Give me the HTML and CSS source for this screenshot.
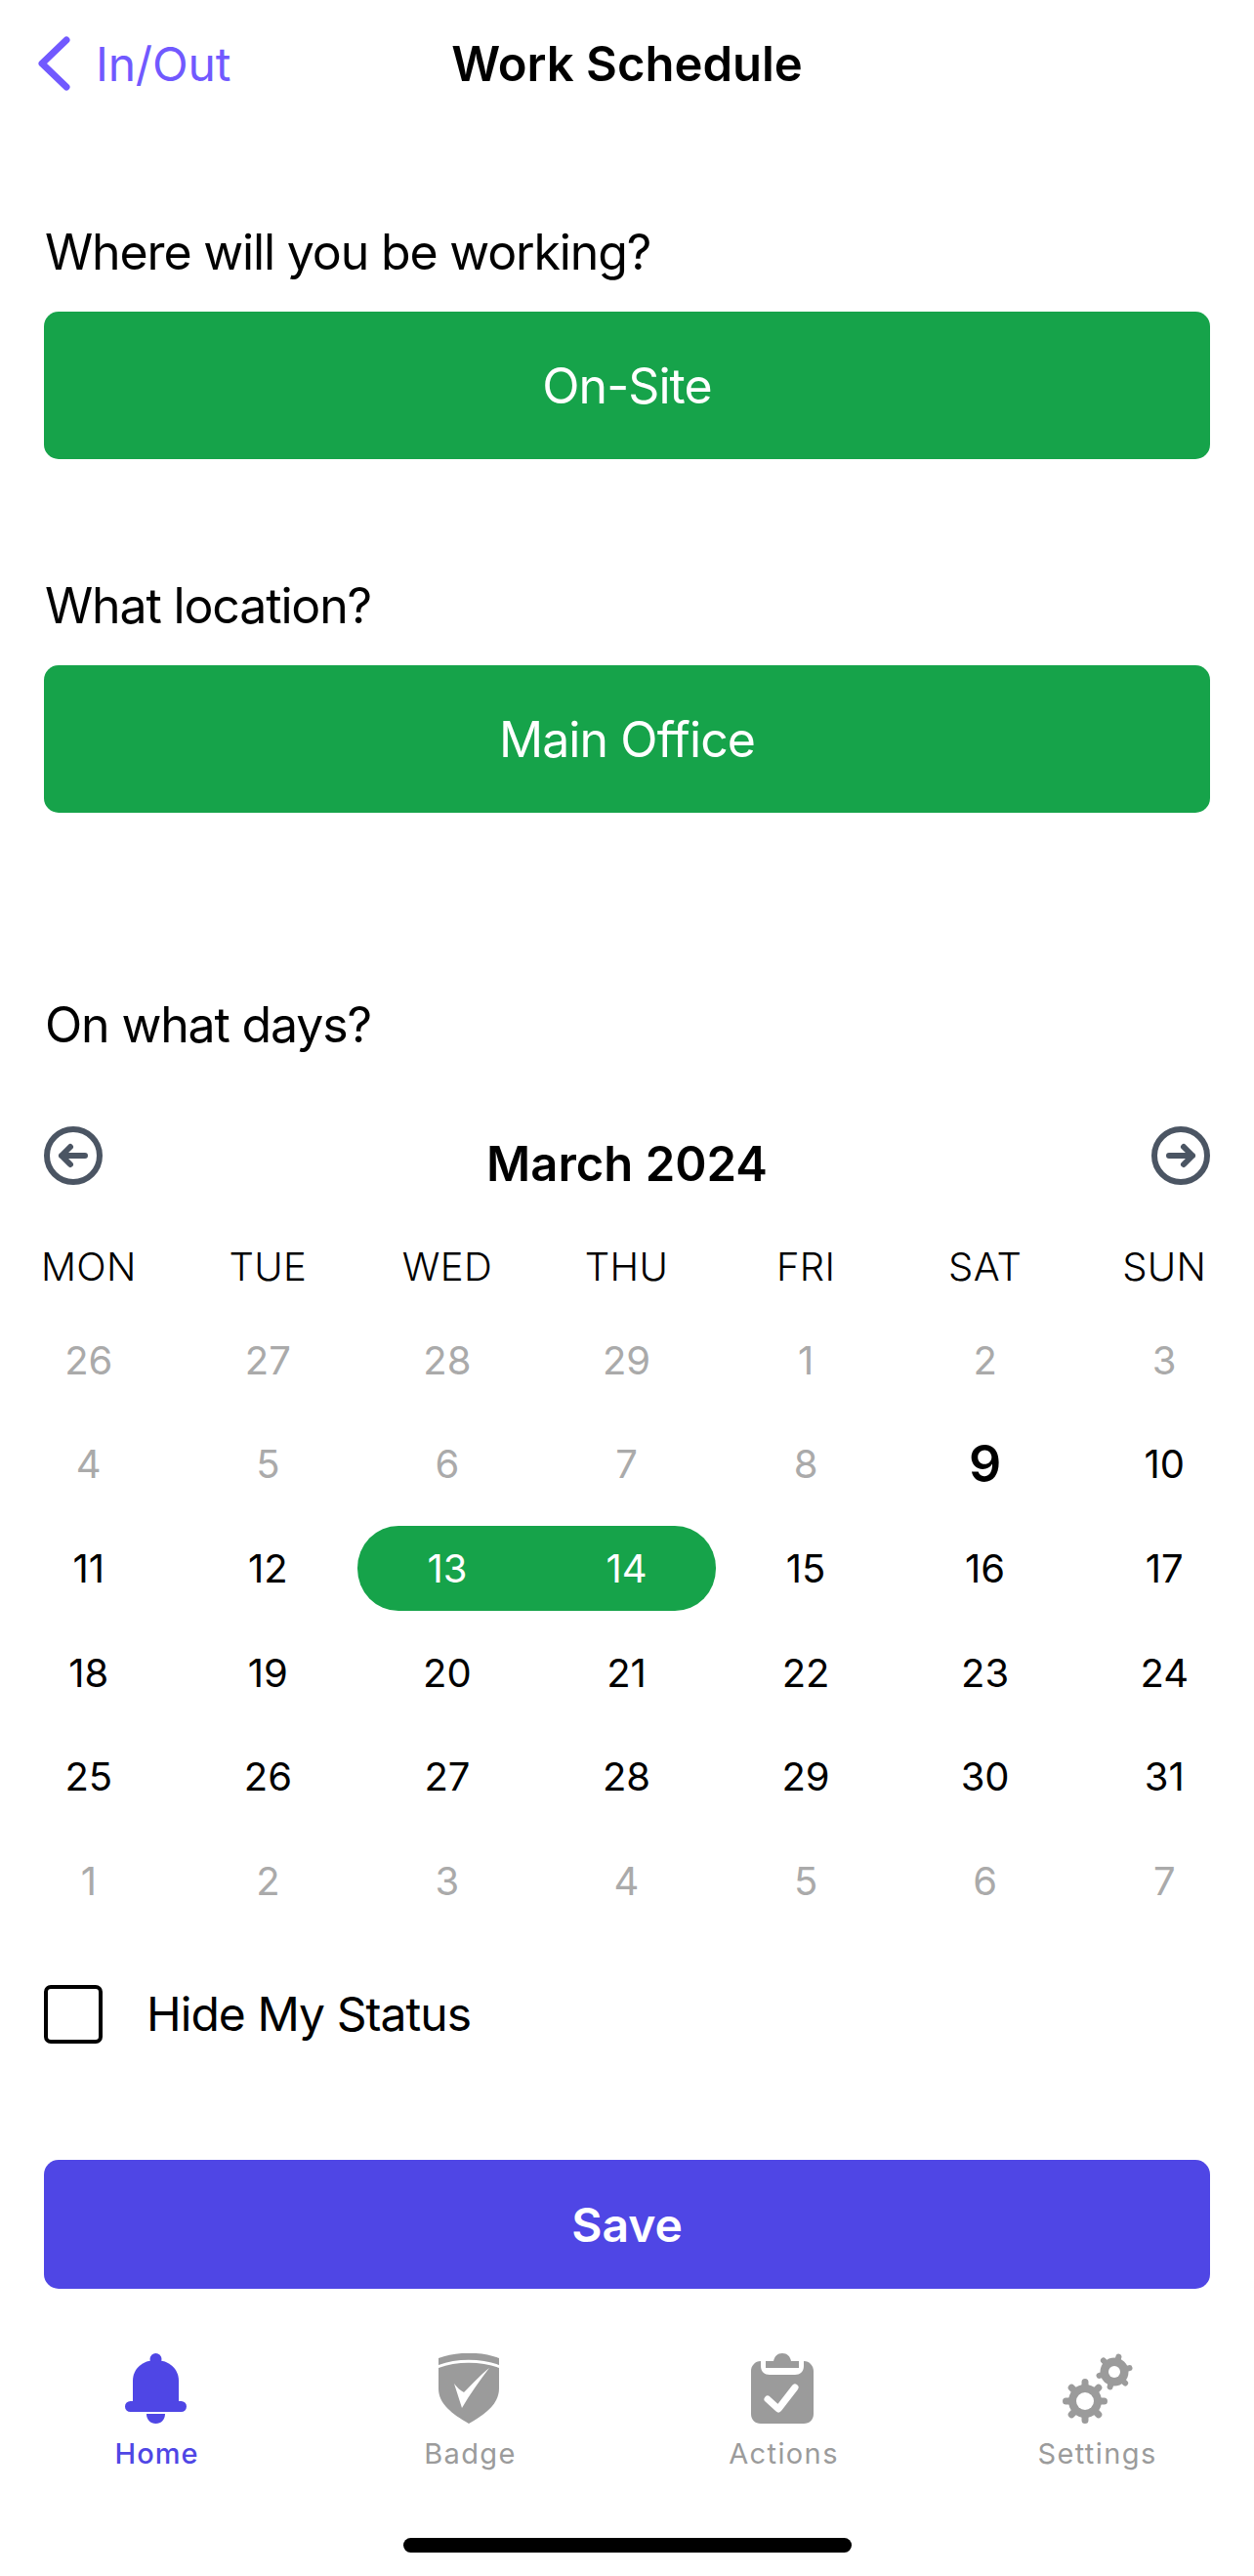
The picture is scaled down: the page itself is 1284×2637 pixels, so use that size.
FILE: index.html
```html
<!DOCTYPE html>
<html>
<head>
<title>Work Schedule</title>
<meta charset="utf-8" />
<link rel="stylesheet" href="styles.css">
</head>
<body>

<div class="header">
	<a class="back">
		<svg class="chevron" viewBox="0 0 33 56"><polyline points="29,4 4,28 29,52" /></svg>
		<span>In/Out</span>
	</a>
	<div class="title">Work Schedule</div>
	<div></div>
</div>

<div class="label label-first">Where will you be working?</div>
<div class="choice">On-Site</div>

<div class="label label-second">What location?</div>
<div class="choice">Main Office</div>

<div class="label label-third">On what days?</div>

<div class="month">
	<svg class="arrow" viewBox="0 0 24 24"><path d="M11 15l-3-3m0 0l3-3m-3 3h8M21 12a9 9 0 11-18 0 9 9 0 0118 0z" /></svg>
	<div class="month-name">March 2024</div>
	<svg class="arrow" viewBox="0 0 24 24"><path d="M13 9l3 3m0 0l-3 3m3-3H8M21 12a9 9 0 11-18 0 9 9 0 0118 0z" /></svg>
</div>

<div class="weekdays">
	<div>MON</div><div>TUE</div><div>WED</div><div>THU</div><div>FRI</div><div>SAT</div><div>SUN</div>
</div>

<div class="days">
	<div class="off">26</div><div class="off">27</div><div class="off">28</div><div class="off">29</div><div class="off">1</div><div class="off">2</div><div class="off">3</div>
	<div class="off">4</div><div class="off">5</div><div class="off">6</div><div class="off">7</div><div class="off">8</div><div class="today">9</div><div>10</div>
	<div>11</div><div>12</div><div class="sel sel-start">13</div><div class="sel sel-end">14</div><div>15</div><div>16</div><div>17</div>
	<div>18</div><div>19</div><div>20</div><div>21</div><div>22</div><div>23</div><div>24</div>
	<div>25</div><div>26</div><div>27</div><div>28</div><div>29</div><div>30</div><div>31</div>
	<div class="off">1</div><div class="off">2</div><div class="off">3</div><div class="off">4</div><div class="off">5</div><div class="off">6</div><div class="off">7</div>
</div>

<div class="status">
	<div class="checkbox"></div>
	<span>Hide My Status</span>
</div>

<div class="save">Save</div>

<div class="tabs">
	<div class="tab tab-active">
		<svg class="tab-icon" viewBox="0 0 63 72">
			<circle cx="31.5" cy="6" r="6" />
			<path d="M8 52V28C8 16 18 7 31.5 7S55 16 55 28V52Z" />
			<rect x="0" y="49" width="63" height="11" rx="5.5" />
			<path d="M22 62H41C41 68 37 72 31.5 72S22 68 22 62Z" />
		</svg>
		<span>Home</span>
	</div>
	<div class="tab">
		<svg class="tab-icon" viewBox="0 0 62 72">
			<path d="M0 5C18 -2 44 -2 62 5V12C44 5 18 5 0 12Z" />
			<path fill-rule="evenodd" d="M0 15C18 8 44 8 62 15V36C62 52 48 62 31 72C14 62 0 52 0 36ZM16 31L24 56C32 42 42 28 52 15C43 22 34 32 26 40C22 38 19 35 16 31Z" />
		</svg>
		<span>Badge</span>
	</div>
	<div class="tab">
		<svg class="tab-icon" viewBox="0 0 64 72">
			<path d="M15 15V8H23C24 3 27 0 32 0S40 3 41 8H49V15Z" />
			<path d="M10 8V13C10 19 14 22 19 22H45C50 22 54 19 54 13V8C60 8 64 13 64 18V62C64 68 60 72 54 72H10C4 72 0 68 0 62V18C0 13 4 8 10 8Z" />
			<polyline class="tick" points="17,47 28,57 45,35" />
		</svg>
		<span>Actions</span>
	</div>
	<div class="tab">
		<svg class="tab-icon tab-icon-gears" viewBox="0 0 72 72">
			<circle cx="23" cy="49" r="17" />
			<path class="teeth-big" d="M23 29.5V68.5M3.5 49H42.5M9.21 35.21L36.79 62.79M36.79 35.21L9.21 62.79" />
			<circle class="hole" cx="23" cy="49" r="9" />
			<circle cx="53" cy="19" r="14.5" />
			<path class="teeth-small" d="M68.52 15.13L37.48 22.87M57.41 3.62L48.59 34.38M41.89 7.49L64.11 30.51" />
			<circle class="hole" cx="53" cy="19" r="6" />
		</svg>
		<span>Settings</span>
	</div>
</div>

<div class="home-bar"></div>

</body>
</html>
```

FILE: styles.css
```css
body {
	margin: 0;
	height: 2637px;
	overflow: hidden;
	background: #fff;
	color: #000;
	font-family: Inter, "Liberation Sans", sans-serif;
}

.header {
	display: grid;
	grid-template-columns: 1fr auto 1fr;
	align-items: center;
	height: 130px;
}

.back {
	display: flex;
	align-items: center;
	gap: 26px;
	padding-left: 39px;
	color: #7159ff;
	font-size: 48px;
	letter-spacing: -0.2px;
}

.chevron {
	width: 33px;
	height: 56px;
	fill: none;
	stroke: #7159ff;
	stroke-width: 7;
	stroke-linecap: round;
	stroke-linejoin: round;
}

.title {
	font-size: 49px;
	font-weight: 600;
}

.label {
	height: 60px;
	line-height: 60px;
	margin-left: 46px;
	font-size: 50px;
	letter-spacing: -1.15px;
}

.label-first { margin-top: 98px; }
.label-second { margin-top: 120px; }
.label-third { margin-top: 187px; }

.choice {
	margin: 31px 45px 0;
	height: 151px;
	line-height: 153px;
	border-radius: 15px;
	background: #16a34a;
	color: #fff;
	text-align: center;
	font-size: 50px;
	letter-spacing: -0.9px;
}

.month {
	display: flex;
	justify-content: space-between;
	margin: 68px 39px 0;
	height: 123px;
}

.arrow {
	width: 72px;
	height: 72px;
	fill: none;
	stroke: #4b5563;
	stroke-width: 2;
	stroke-linecap: round;
	stroke-linejoin: round;
}

.month-name {
	margin-top: 15px;
	height: 60px;
	line-height: 60px;
	font-size: 49px;
	font-weight: 600;
}

.weekdays, .days {
	display: grid;
	grid-template-columns: repeat(7, 1fr);
	margin-left: -1px;
	text-align: center;
	font-size: 40px;
}

.weekdays {
	height: 69px;
	font-weight: 300;
	letter-spacing: 0.3px;
}

.weekdays div {
	line-height: 54px;
}

.days {
	grid-auto-rows: 106.6px;
}

.days div {
	display: flex;
	align-items: center;
	justify-content: center;
}

.days .off {
	color: #aaa;
}

.days .today {
	font-size: 52px;
	font-weight: 600;
}

.days .sel {
	margin: 10px 0;
	background: #16a34a;
	color: #fff;
}

.sel-start {
	border-radius: 42px 0 0 42px / 43px 0 0 43px;
}

.sel-end {
	border-radius: 0 42px 42px 0 / 0 43px 43px 0;
}

.status {
	display: flex;
	align-items: center;
	gap: 45px;
	margin: 53px 45px 0;
	font-size: 48px;
	letter-spacing: -0.95px;
}

.checkbox {
	box-sizing: border-box;
	width: 60px;
	height: 60px;
	border: 4px solid #000;
	border-radius: 7px;
}

.save {
	margin: 119px 45px 0;
	height: 132px;
	line-height: 133px;
	border-radius: 15px;
	background: #4f46e5;
	color: #fff;
	text-align: center;
	font-size: 48px;
	font-weight: 600;
}

.tabs {
	display: grid;
	grid-template-columns: repeat(4, 321px);
	margin-top: 66px;
}

.tab {
	display: flex;
	flex-direction: column;
	align-items: center;
	color: #9b9b9b;
	font-size: 29px;
	line-height: 36px;
	letter-spacing: 1.4px;
}

.tab-active {
	color: #4f46e5;
	font-weight: 500;
	letter-spacing: 1px;
}

.tab-icon {
	height: 72px;
	margin-right: 3px;
	margin-bottom: 13px;
	fill: #9b9b9b;
}

.tab-icon-gears {
	margin-right: 0;
}

.tab-active .tab-icon {
	fill: #4f46e5;
}

.tick {
	fill: none;
	stroke: #fff;
	stroke-width: 7;
	stroke-linecap: round;
	stroke-linejoin: round;
}

.hole {
	fill: #fff;
}

.teeth-big, .teeth-small {
	fill: none;
	stroke: #9b9b9b;
	stroke-linecap: round;
}

.teeth-big {
	stroke-width: 7;
}

.teeth-small {
	stroke-width: 6;
}

.home-bar {
	width: 459px;
	height: 15px;
	margin: 68px auto 0;
	border-radius: 8px;
	background: #000;
}
```
